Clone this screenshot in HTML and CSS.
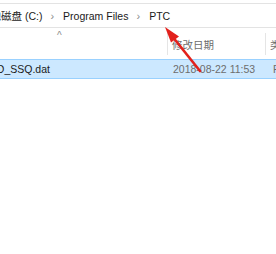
FILE: index.html
```html
<!DOCTYPE html>
<html>
<head>
<meta charset="utf-8">
<link rel="stylesheet" href="styles.css">
</head>
<body>
<div class="win">
  <div class="topline"></div>
  <div class="address">
    <span class="crumb first">本地磁盘 (C:)</span>
    <span class="sep">›</span>
    <span class="crumb">Program Files</span>
    <span class="sep">›</span>
    <span class="crumb">PTC</span>
  </div>
  <div class="header">
    <div class="col name"><span class="caret">^</span></div>
    <div class="col date">修改日期</div>
    <div class="col type">类型</div>
  </div>
  <div class="row selected">
    <div class="cell name">LD_SSQ.dat</div>
    <div class="cell date">2018-08-22 11:53</div>
    <div class="cell type">F</div>
  </div>
  <svg class="arrow" width="276" height="254" viewBox="0 0 276 254">
    <line x1="200" y1="71" x2="172" y2="36" stroke="#e2211c" stroke-width="2.6" stroke-linecap="round"/>
    <polygon points="165,27 179,36.5 171,42.5" fill="#e2211c"/>
  </svg>
</div>
</body>
</html>
```
FILE: styles.css
```css
html, body {
  margin: 0;
  padding: 0;
  background: #ffffff;
}
.win {
  position: relative;
  width: 276px;
  height: 254px;
  overflow: hidden;
  font-family: "Liberation Sans", "Noto Sans CJK SC", sans-serif;
  font-size: 10.5px;
}
.topline {
  height: 3px;
  border-bottom: 1px solid #e3e3e3;
}
.address {
  height: 23px;
  border-bottom: 1px solid #e3e3e3;
  display: flex;
  align-items: center;
  white-space: nowrap;
  color: #1a1a1a;
  margin-left: -20px;
}
.crumb {
  flex-shrink: 0;
}
.sep {
  flex-shrink: 0;
  color: #8a8a8a;
  font-size: 11px;
  margin: 0 9px 0 8px;
}
.header {
  display: flex;
  height: 22px;
  margin-top: 5px;
  color: #6d6d6d;
  white-space: nowrap;
}
.col {
  display: flex;
  align-items: center;
  flex-shrink: 0;
}
.header .name {
  width: 167px;
  position: relative;
  border-right: 1px solid #e5e5e5;
}
.caret {
  position: absolute;
  left: 57px;
  top: -3px;
  font-size: 10px;
  color: #8c8c8c;
}
.header .date {
  width: 98px;
  padding-left: 4px;
  box-sizing: border-box;
  border-right: 1px solid #e5e5e5;
}
.header .type {
  padding-left: 4px;
}
.row {
  display: flex;
  height: 18px;
  align-items: center;
  margin-top: 4px;
  white-space: nowrap;
}
.selected {
  background: #cce8ff;
  border-top: 1px solid #99d1ff;
  border-bottom: 1px solid #99d1ff;
}
.cell {
  flex-shrink: 0;
}
.cell.name {
  width: 182px;
  margin-left: -9px;
  color: #1a1a1a;
}
.cell.date {
  width: 100px;
  color: #6d6d6d;
}
.cell.type {
  color: #6d6d6d;
}
.arrow {
  position: absolute;
  left: 0;
  top: 0;
}
```
